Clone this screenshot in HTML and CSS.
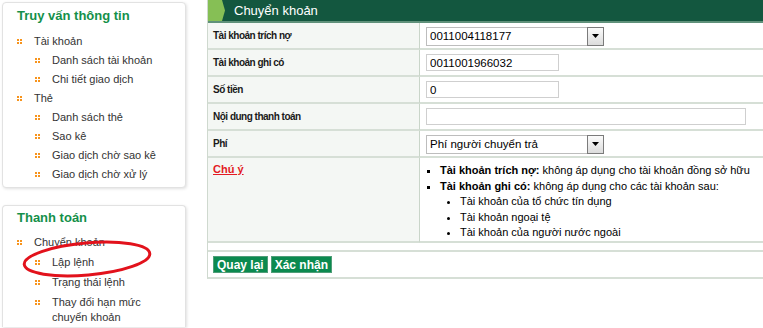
FILE: index.html
```html
<!DOCTYPE html>
<html lang="vi">
<head>
    <meta charset="UTF-8">
    <meta name="viewport" content="width=device-width, initial-scale=1.0">
    <title>Chuyển khoản</title>
    <link rel="stylesheet" href="styles.css">
</head>
<body>
    <div class="page">
        <aside class="sidebar">
            <div class="box">
                <h2 class="box-title">Truy vấn thông tin</h2>
                <ul class="menu">
                    <li class="menu-item"><span class="dot"></span>Tài khoản</li>
                    <li class="menu-item sub"><span class="dot"></span>Danh sách tài khoản</li>
                    <li class="menu-item sub"><span class="dot"></span>Chi tiết giao dịch</li>
                    <li class="menu-item"><span class="dot"></span>Thẻ</li>
                    <li class="menu-item sub"><span class="dot"></span>Danh sách thẻ</li>
                    <li class="menu-item sub"><span class="dot"></span>Sao kê</li>
                    <li class="menu-item sub"><span class="dot"></span>Giao dịch chờ sao kê</li>
                    <li class="menu-item sub"><span class="dot"></span>Giao dịch chờ xử lý</li>
                </ul>
            </div>

            <div class="box box-pay">
                <h2 class="box-title">Thanh toán</h2>
                <ul class="menu">
                    <li class="menu-item"><span class="dot"></span>Chuyển khoản</li>
                    <li class="menu-item sub"><span class="dot"></span>Lập lệnh</li>
                    <li class="menu-item sub"><span class="dot"></span>Trạng thái lệnh</li>
                    <li class="menu-item sub"><span class="dot"></span>Thay đổi hạn mức chuyển khoản</li>
                </ul>
                <!-- vòng đỏ đánh dấu -->
                <svg class="mark" width="140" height="46" viewBox="0 0 140 46">
                    <ellipse cx="68" cy="22" rx="63" ry="16" transform="rotate(-5 68 22)" fill="none" stroke="#e2121c" stroke-width="3"/>
                </svg>
            </div>
        </aside>

        <main class="panel">
            <div class="panel-head">
                <span class="tab"></span>
                <span class="panel-title">Chuyển khoản</span>
            </div>

            <table class="form">
                <tr>
                    <td class="label">Tài khoản trích nợ</td>
                    <td class="field">
                        <div class="select">
                            <span class="select-value">0011004118177</span>
                            <span class="select-arrow">
                                <svg width="7" height="4" viewBox="0 0 7 4"><path d="M0 0h7L3.5 4z" fill="#000"/></svg>
                            </span>
                        </div>
                    </td>
                </tr>
                <tr>
                    <td class="label">Tài khoản ghi có</td>
                    <td class="field"><input class="input" type="text" value="0011001966032"></td>
                </tr>
                <tr>
                    <td class="label">Số tiền</td>
                    <td class="field"><input class="input" type="text" value="0"></td>
                </tr>
                <tr>
                    <td class="label">Nội dung thanh toán</td>
                    <td class="field"><input class="input input-wide" type="text" value=""></td>
                </tr>
                <tr>
                    <td class="label">Phí</td>
                    <td class="field">
                        <div class="select">
                            <span class="select-value">Phí người chuyển trả</span>
                            <span class="select-arrow">
                                <svg width="7" height="4" viewBox="0 0 7 4"><path d="M0 0h7L3.5 4z" fill="#000"/></svg>
                            </span>
                        </div>
                    </td>
                </tr>
                <tr class="note-row">
                    <td class="label"><a class="warn" href="#">Chú ý</a></td>
                    <td class="field">
                        <ul class="notes">
                            <li><b>Tài khoản trích nợ:</b> không áp dụng cho tài khoản đồng sở hữu</li>
                            <li><b>Tài khoản ghi có:</b> không áp dụng cho các tài khoản sau:
                                <ul class="notes-sub">
                                    <li>Tài khoản của tổ chức tín dụng</li>
                                    <li>Tài khoản ngoại tệ</li>
                                    <li>Tài khoản của người nước ngoài</li>
                                </ul>
                            </li>
                        </ul>
                    </td>
                </tr>
                <tr class="spacer-row">
                    <td colspan="2"></td>
                </tr>
            </table>

            <div class="actions">
                <button class="btn">Quay lại</button>
                <button class="btn">Xác nhận</button>
            </div>
        </main>
    </div>
</body>
</html>
```

FILE: styles.css
```css
:root {
    --green-dark: #13573f;
    --green-tab: #86bf55;
    --green-title: #14904a;
    --btn-green: #0b8a4f;
    --cell-line: #d6dfd6;
    --label-bg: #f4f7f4;
    --orange: #f7941d;
    --text-color: #333333;
}

* {
    box-sizing: border-box;
    margin: 0;
    padding: 0;
}

body {
    font-family: 'Liberation Sans', Arial, sans-serif;
    color: var(--text-color);
    background: #ffffff;
    width: 763px;
    height: 328px;
    overflow: hidden;
}

.page {
    display: flex;
    align-items: flex-start;
    gap: 21px;
}

/* cột trái */
.sidebar {
    width: 186px;
    padding-left: 2px;
    flex-shrink: 0;
}

.box {
    margin-top: 2px;
    height: 186px;
    background: #fff;
    border: 1px solid #e2e2e2;
    border-radius: 4px;
    box-shadow: 1px 1px 3px rgba(0, 0, 0, 0.12);
    padding: 5px 24px 0 13px;
}

/* hộp thứ hai bị cắt ở mép dưới */
.box-pay {
    position: relative;
    margin-top: 17px;
    height: 122px;
    padding-top: 4px;
    border-bottom: 0;
    border-radius: 4px 4px 0 0;
}

.box-title {
    font-size: 13px;
    line-height: 16px;
    font-weight: bold;
    color: var(--green-title);
    padding-left: 1px;
    margin-bottom: 8px;
}

.box-pay .box-title {
    margin-bottom: 6px;
}

.menu {
    list-style: none;
}

.menu-item {
    display: flex;
    align-items: flex-start;
    font-size: 11px;
    line-height: 15px;
    padding: 2px 0;
    color: #333;
}

.box-pay .menu-item {
    padding: 3px 0 2px;
}

.menu-item.sub {
    padding-left: 18px;
}

.dot {
    flex-shrink: 0;
    width: 2px;
    height: 2px;
    margin: 5px 15px 0 1px;
    background: var(--orange);
    box-shadow: 3px 0 0 var(--orange), 0 3px 0 var(--orange), 3px 3px 0 var(--orange);
}

.mark {
    position: absolute;
    left: 16px;
    top: 31px;
}

/* khung chính */
.panel {
    flex: 1;
    border-left: 1px solid #cfd9cf;
    border-bottom: 2px solid #d6dfd6;
}

.panel-head {
    display: flex;
    align-items: center;
    height: 23px;
    background: var(--green-dark);
    border-bottom: 2px solid #5f917a;
    color: #fff;
}

.tab {
    align-self: stretch;
    width: 17px;
    background: var(--green-tab);
    clip-path: polygon(0 0, 14px 0, 17px 50%, 14px 100%, 0 100%);
}

.panel-title {
    margin-left: 9px;
    font-size: 13px;
}

.form {
    width: 100%;
    border-collapse: separate;
    border-spacing: 0;
}

.form td {
    height: 27px;
    border-bottom: 2px solid var(--cell-line);
    vertical-align: middle;
}

.label {
    width: 212px;
    background: var(--label-bg);
    border-right: 1px solid #c9d5c9;
    padding-left: 5px;
    font-size: 10px;
    font-weight: bold;
    letter-spacing: -0.5px;
    color: #1a1a1a;
}

.field {
    padding-left: 6px;
}

.input {
    display: block;
    width: 133px;
    height: 17px;
    border: 1px solid #cfcfcf;
    padding: 0 3px;
    font-family: 'Liberation Sans', Arial, sans-serif;
    font-size: 11.5px;
    color: #000;
    outline: none;
}

.input-wide {
    width: 320px;
}

.select {
    display: flex;
    align-items: center;
    width: 178px;
    height: 19px;
    margin-top: 1px;
    border: 1px solid #bdbdbd;
    background: #fff;
}

.select-value {
    flex: 1;
    padding-left: 3px;
    font-size: 11.5px;
    color: #000;
}

.select-arrow {
    display: flex;
    align-items: center;
    justify-content: center;
    width: 17px;
    height: 19px;
    margin: -1px -1px -1px 0;
    border: 1px solid #7b7b7b;
    background: linear-gradient(#fbfbfb, #dcdcdc);
}

.note-row td {
    height: 85px;
    vertical-align: top;
    padding-top: 5px;
}

.warn {
    color: #e31b23;
    font-size: 11px;
    letter-spacing: 0;
}

.notes {
    list-style: square;
    padding-left: 14px;
    font-size: 11px;
    line-height: 15.5px;
    color: #000;
}

.notes-sub {
    list-style: disc;
    padding-left: 20px;
}

.spacer-row td {
    height: 9px;
    background: #fff;
}

.actions {
    display: flex;
    gap: 3px;
    padding: 4px 5px 4px;
}

.btn {
    height: 17px;
    padding: 0 3px;
    border: 1px solid #4f9e78;
    background: var(--btn-green);
    color: #fff;
    font-family: 'Liberation Sans', Arial, sans-serif;
    font-size: 12px;
    font-weight: bold;
    cursor: pointer;
}
```
